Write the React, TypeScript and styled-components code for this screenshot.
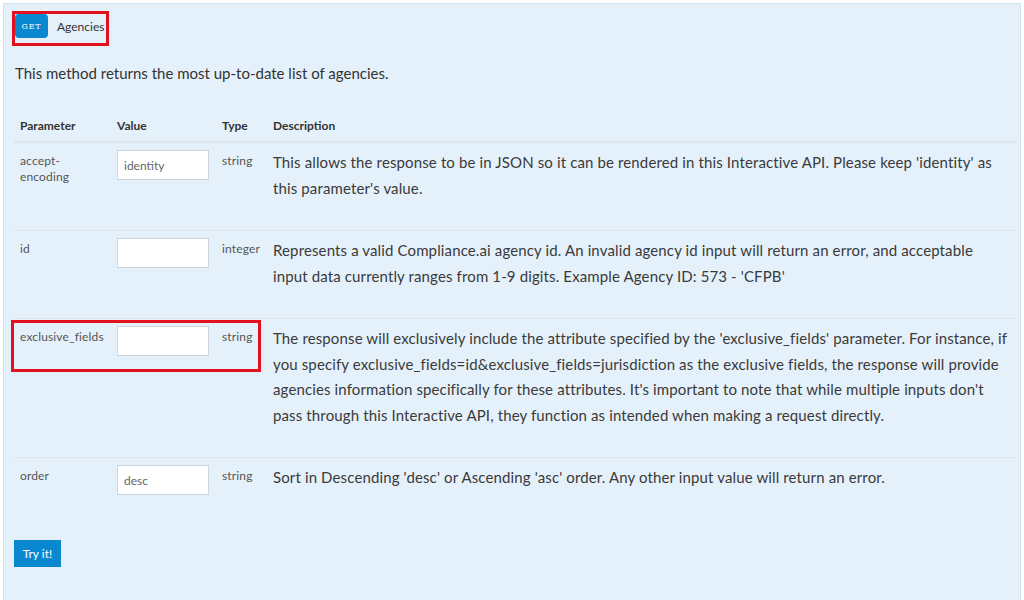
import React from 'react';
import styled, { createGlobalStyle } from 'styled-components';

const GlobalStyle = createGlobalStyle`
    body {
        margin: 0;
        background: #ffffff;
        font-family: Lato, "Liberation Sans", sans-serif;
        color: #333333;
    }
`
const Panel = styled.div`
    margin: 3px 0 0 3px;
    width: 1018px;
    min-height: 640px;
    box-sizing: border-box;
    background: #e5f1fa;
    border: 1px solid #cfe2f0;
    padding: 7px 7px 0 10px;
`
const Heading = styled.div`
    display: inline-flex;
    align-items: center;
    gap: 9px;
    margin-left: -2px;
    border: 3px solid #e3101e;
    padding: 0 2px 5px 0;
`
const Badge = styled.span`
    display: inline-flex;
    align-items: center;
    justify-content: center;
    width: 33px;
    height: 24px;
    border-radius: 4px;
    background: #0a88cf;
    color: #ffffff;
    font-family: "DejaVu Serif", "Liberation Serif", serif;
    font-size: 8px;
    letter-spacing: 0.8px;
`
const Title = styled.span`
    font-size: 12px;
    color: #333333;
`
const Intro = styled.p`
    margin: 17px 0 0 1px;
    font-size: 15px;
    line-height: 20px;
`
const Table = styled.div`
    margin-top: 30px;
    width: 1003px;
`
const Row = styled.div<{ $head?: boolean }>`
    position: relative;
    display: grid;
    grid-template-columns: 97px 105px 51px 1fr;
    border-bottom: ${p => p.$head ? '2px' : '1px'} solid #dde6ec;

    &:last-child {
        border-bottom: none;
    }
`
const HeadCell = styled.div`
    padding: 5px 6px 8px;
    font-size: 12px;
    font-weight: 700;
    color: #333333;
`
const SmallCell = styled.div`
    padding: 10px 6px;
    font-size: 12px;
    line-height: 16px;
    letter-spacing: 0.15px;
    color: #555555;
`
const InputCell = styled.div`
    padding: 7px 0 0 6px;
`
const Field = styled.input`
    box-sizing: border-box;
    width: 92px;
    height: 30px;
    border: 1px solid #cfd6db;
    background: #ffffff;
    padding: 0 6px;
    font-family: Lato, "Liberation Sans", sans-serif;
    font-size: 12px;
    color: #666666;
    outline: none;
`
const DescCell = styled.div`
    padding: 7px 6px 29px;
    font-size: 15px;
    line-height: 25.5px;
    letter-spacing: 0.13px;
    color: #3a3a3a;
`
const Highlight = styled.div`
    position: absolute;
    left: -3px;
    top: 1px;
    width: 250px;
    height: 52px;
    box-sizing: border-box;
    border: 3px solid #e3101e;
    pointer-events: none;
`
const TryButton = styled.button`
    margin: 20px 0 0 0;
    width: 47px;
    height: 27px;
    border: none;
    background: #0a88cf;
    color: #ffffff;
    font-family: Lato, "Liberation Sans", sans-serif;
    font-size: 12px;
    padding: 0;
`

type Param = {
    name: string,
    value: string,
    type: string,
    desc: string,
    marked?: boolean,
}

const params: Param[] = [
    {
        name: 'accept-encoding',
        value: 'identity',
        type: 'string',
        desc: "This allows the response to be in JSON so it can be rendered in this Interactive API. Please keep 'identity' as this parameter's value.",
    },
    {
        name: 'id',
        value: '',
        type: 'integer',
        desc: "Represents a valid Compliance.ai agency id. An invalid agency id input will return an error, and acceptable input data currently ranges from 1-9 digits. Example Agency ID: 573 - 'CFPB'",
    },
    {
        name: 'exclusive_fields',
        value: '',
        type: 'string',
        marked: true,
        desc: "The response will exclusively include the attribute specified by the 'exclusive_fields' parameter. For instance, if you specify exclusive_fields=id&exclusive_fields=jurisdiction as the exclusive fields, the response will provide agencies information specifically for these attributes. It's important to note that while multiple inputs don't pass through this Interactive API, they function as intended when making a request directly.",
    },
    {
        name: 'order',
        value: 'desc',
        type: 'string',
        desc: "Sort in Descending 'desc' or Ascending 'asc' order. Any other input value will return an error.",
    },
]

const App: React.FC = () => {
    return (
        <>
            <GlobalStyle />
            <Panel>
                <Heading>
                    <Badge>GET</Badge>
                    <Title>Agencies</Title>
                </Heading>
                <Intro>This method returns the most up-to-date list of agencies.</Intro>
                <Table>
                    <Row $head>
                        <HeadCell>Parameter</HeadCell>
                        <HeadCell>Value</HeadCell>
                        <HeadCell>Type</HeadCell>
                        <HeadCell>Description</HeadCell>
                    </Row>
                    {params.map(p => (
                        <Row key={p.name}>
                            <SmallCell>{p.name}</SmallCell>
                            <InputCell><Field defaultValue={p.value} /></InputCell>
                            <SmallCell>{p.type}</SmallCell>
                            <DescCell>{p.desc}</DescCell>
                            {p.marked && <Highlight />}
                        </Row>
                    ))}
                </Table>
                <TryButton>Try it!</TryButton>
            </Panel>
        </>
    );
};

export default App;
